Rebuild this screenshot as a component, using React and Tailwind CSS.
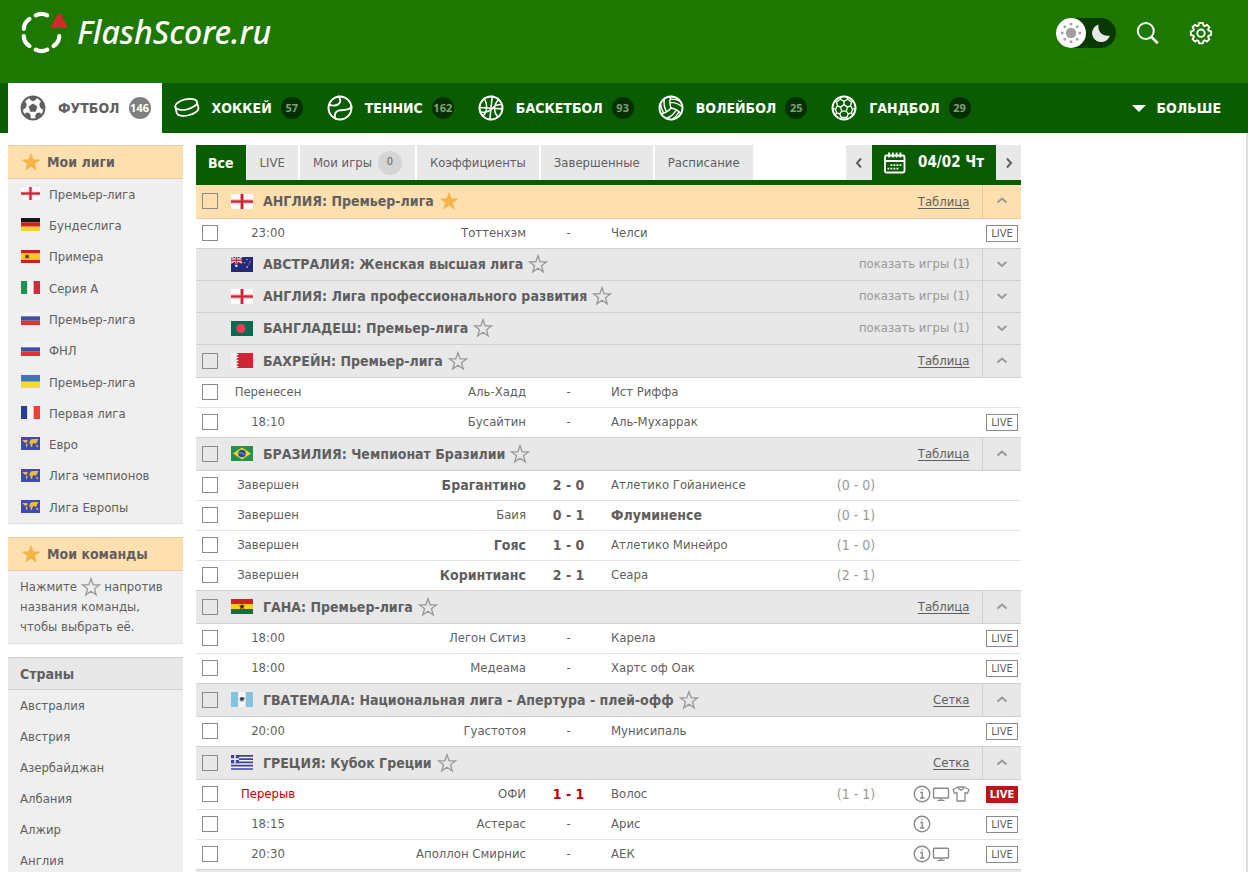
import React from 'react';

const STAR = 'M10 0.5l2.5 6.9 7.2 0.2-5.7 4.4 2 7-6-4.1-6 4.1 2-7L0.3 7.6l7.2-0.2z';

function Star({ filled, inline }) {
  return (
    <svg viewBox="-1.500 -1.500 23 23" className={`h-5 w-5 shrink-0 ${inline ? 'inline align-top' : ''}`} aria-hidden="true">
      <path d={STAR} fill={filled ? '#f6b244' : 'none'} stroke={filled ? '#f6b244' : '#999'} strokeWidth={filled ? 0.8 : 1.5} strokeLinejoin="miter" />
    </svg>
  );
}

const stripes = {
  de: ['h', '#151515', '#d8201f', '#fad02c'],
  ru: ['h', '#f4f4f4', '#3a52a8', '#e8302f'],
  it: ['v', '#1f9350', '#f5f5f5', '#cf2b3a'],
  fr: ['v', '#26408f', '#f5f5f5', '#ee4135'],
  gh: ['h', '#cf2027', '#f8d11c', '#1a6b3f'],
  gt: ['v', '#85c3df', '#f5f5f5', '#85c3df'],
};

function FlagArt({ code }) {
  if (stripes[code]) {
    const [dir, a, b, c] = stripes[code];
    const cols = [a, b, c];
    return (
      <>
        {cols.map((f, i) =>
          dir === 'h' ? (
            <rect key={i} x="0" y={i * 5} width="22" height="5" fill={f} />
          ) : (
            <rect key={i} x={i * 7.33} y="0" width="7.4" height="15" fill={f} />
          ),
        )}
        {code === 'gh' && <path d="M11 4.6l.8 2h2.2l-1.7 1.4.6 2.3-1.9-1.3-1.9 1.3.6-2.3L8 6.6h2.2z" fill="#222" />}
        {code === 'gt' && (
          <>
            <circle cx="11" cy="7.2" r="2.3" fill="#777" />
            <circle cx="10.6" cy="6.8" r="1.3" fill="#333" />
            <circle cx="12.8" cy="6.2" r=".7" fill="#333" />
          </>
        )}
      </>
    );
  }
  switch (code) {
    case 'en':
      return (
        <>
          <rect width="22" height="15" fill="#fbfbfb" />
          <path d="M11 0v15M0 7.5h22" stroke="#e9a0a6" strokeWidth="4" />
          <path d="M11 0v15M0 7.5h22" stroke="#cf2334" strokeWidth="2.2" />
        </>
      );
    case 'es':
      return (
        <>
          <rect width="22" height="15" fill="#c8202c" />
          <rect y="3.5" width="22" height="8" fill="#fbc72b" />
          <path d="M4.6 9.5v-3l1-1h3l1 1v3z" fill="#8a5a1e" />
          <path d="M6 6h2v3H6z" fill="#4d3312" />
        </>
      );
    case 'ua':
      return (
        <>
          <rect width="22" height="8" fill="#3f75bd" />
          <rect y="7.5" width="22" height="7.5" fill="#f3dc2c" />
        </>
      );
    case 'eu':
      return (
        <>
          <rect width="22" height="15" fill="#3d4cae" />
          <path d="M1.5 3.5h5.5l1 1.5-2 1.5H4.8L3.8 6zM5.5 7.5l2.3 1-1.2 3.5-.8-1.5zM10 5l1.5-2 3-.8h6L19 4.5l-1 2.5-1.5 1L15 6.5 13.5 8l-.8 3.5-1.3-.3-.4-2.7L9.7 7.6zM17.5 9.5l2-.2.5 1.9-1.8.3z" fill="#f2bd2d" />
        </>
      );
    case 'au':
      return (
        <>
          <rect width="22" height="15" fill="#252a74" />
          <path d="M0 0l11 6M11 0L0 6" stroke="#e9b9c6" strokeWidth="1.6" />
          <path d="M5.5 0v6.5M0 3.2h11" stroke="#f3dfe4" strokeWidth="2.6" />
          <path d="M5.5 0v6.5M0 3.2h11" stroke="#d33340" strokeWidth="1.5" />
          <circle cx="5.3" cy="8.8" r="1.3" fill="#e8e8f2" />
          <g fill="#9ea1c4">
            <circle cx="16" cy="2.6" r=".8" />
            <circle cx="13.5" cy="5.7" r=".8" />
            <circle cx="19" cy="5" r=".8" />
            <circle cx="16.2" cy="10" r="1" />
            <circle cx="17.6" cy="7" r=".6" />
          </g>
        </>
      );
    case 'bd':
      return (
        <>
          <rect width="22" height="15" fill="#086a52" />
          <circle cx="9.8" cy="7.5" r="4.6" fill="#e93e4d" />
        </>
      );
    case 'bh':
      return (
        <>
          <rect width="22" height="15" fill="#cb2631" />
          <path d="M0 0h5l3 1.5L5 3l3 1.5L5 6l3 1.5L5 9l3 1.5L5 12l3 1.5L5 15H0z" fill="#f3f1f1" />
        </>
      );
    case 'br':
      return (
        <>
          <rect width="22" height="15" fill="#22914d" />
          <path d="M11 1.5l9 6-9 6-9-6z" fill="#f4d42d" />
          <circle cx="11" cy="7.5" r="3.8" fill="#2c4b93" />
          <path d="M8 6.8q3.500-.3 6 2" stroke="#8ea6cc" strokeWidth=".8" fill="none" />
        </>
      );
    case 'gr':
      return (
        <>
          <rect width="22" height="15" fill="#f0f0f7" />
          <path d="M0 .8h22M0 4.1h22M0 7.4h22M0 10.7h22M0 14h22" stroke="#3d4394" strokeWidth="1.7" />
          <rect width="8" height="8.2" fill="#3d4394" />
          <path d="M4 0v8.2M0 4.1h8" stroke="#e8e8f4" strokeWidth="1.6" />
        </>
      );
    default:
      return null;
  }
}

function Flag({ code, small }) {
  return (
    <svg viewBox="0 0 22 15" preserveAspectRatio="none" className={small ? '-mt-[2px] h-[13px] w-[19px] shrink-0' : 'h-[15px] w-[22px] shrink-0'} aria-hidden="true">
      <FlagArt code={code} />
    </svg>
  );
}

function SportIcon({ name }) {
  const p = { fill: 'none', stroke: 'currentColor', strokeWidth: 1.9, strokeLinecap: 'round', strokeLinejoin: 'round' };
  return (
    <svg viewBox="0 0 26 26" className="h-[26px] w-[26px] shrink-0" aria-hidden="true" {...p}>
      {name === 'football' && (
        <>
          <circle cx="13" cy="13" r="11.4" strokeWidth="2" />
          <path d="M13 8.4l4.4 3.2-1.7 5.1h-5.4l-1.700-5.100z" fill="currentColor" stroke="none" />
          <path d="M9 1.800h8l-1.100 3-2.900 1.400-2.900-1.400zM1.400 11l3.500-5 1.800 3-.7 3.600-3 2.400zM24.600 11l-3.500-5-1.800 3 .7 3.600 3 2.400zM4.400 21l1.300-3.400 3.500.3 1.700 2.900-.8 3.600zM21.600 21l-1.300-3.400-3.500.3-1.700 2.900.8 3.600z" fill="currentColor" stroke="none" />
        </>
      )}
      {name === 'hockey' && (
        <g transform="translate(13 13) scale(.93) rotate(-13) translate(-13 -13.600)">
          <ellipse cx="13" cy="9.6" rx="12" ry="5.4" />
          <path d="M1 9.8v6.4c0 3 5.4 5.4 12 5.4s12-2.4 12-5.4V9.8" />
        </g>
      )}
      {name === 'tennis' && (
        <>
          <circle cx="13" cy="13" r="11.5" />
          <path d="M2.4 9.600c4 2.200 10.200.6 10.800-3.200.2-1.600-.4-3.400-1.600-4.900" />
          <path d="M8.600 23.600c-2-4.400-.2-7.200 3.600-8.200 4.600-1.200 9.200 1 12.200-3.600" />
        </>
      )}
      {name === 'basketball' && (
        <>
          <circle cx="13" cy="13" r="11.5" />
          <path d="M14.2 1.4L11.8 24.6M1.5 12.5l11.5.8 11.5.6" strokeWidth="1.6" />
          <path d="M6 3.8c3.6 4.600 3.800 13.800-1.600 17.400M21 4.600c-5.600 4.400-5.600 12.400-1.400 17M24.200 9.600c-3.800-.2-7.600 1-9.800 3.600-2 2.400-6.400 4.400-12 3.800" strokeWidth="1.5" />
        </>
      )}
      {name === 'volleyball' && (
        <>
          <circle cx="13" cy="13" r="11.5" />
          <g transform="translate(13 13) scale(1.150) translate(-12 -12)" strokeWidth="1.250">
            {[0, 120, 240].map((a) => (
              <path key={a} transform={`rotate(${a} 12 12)`} d="M12 12a13.300 13.300 0 0 1 0-10M11.100 7.100a16.550 16.550 0 0 1 10.900 4M11.300 4.300a17 17 0 0 1 9 1.900" />
            ))}
          </g>
        </>
      )}
      {name === 'handball' && (
        <>
          <circle cx="13" cy="13" r="11.5" />
          <path d="M13 9.6l3.6 2.5-1.4 4.1h-4.4l-1.4-4.1zM13 9.600V6.400M16.600 12.100l3-1.200M15.200 16.200l2 2.700M10.800 16.200l-2 2.700M9.400 12.100l-3-1.200M13 6.400l3.600-2.200 3.800 2.600-.8 4.100 2 3.400-1.200 3.600-3.200 1-1.400 3.600h-5.600l-1.400-3.600-3.200-1-1.200-3.600 2-3.400-.8-4.100 3.800-2.600zM9.400 4.200l.4-2.200M16.600 4.200L16.200 2M20.400 6.800l2-.2M21.600 14.300l2.700-.8M20.400 17.900l1.200 2M5.600 6.800l-2-.2M4.400 14.300l-2.700-.8M5.600 17.900l-1.200 2M10.200 22.500l-.8 1.500M15.800 22.500l.8 1.500" strokeWidth="1.300" />
        </>
      )}
    </svg>
  );
}

const sports = [
  ['football', 'Футбол', 146],
  ['hockey', 'Хоккей', 57],
  ['tennis', 'Теннис', 162],
  ['basketball', 'Баскетбол', 93],
  ['volleyball', 'Волейбол', 25],
  ['handball', 'Гандбол', 29],
];

function Header() {
  return (
    <header className="flex h-[83px] items-start justify-between bg-[#1e7800] px-5">
      <a href="#" className="flex items-center gap-[9px] pt-[9px] text-white" aria-label="FlashScore.ru">
        <svg viewBox="0 0 48 46" className="h-[46px] w-12" aria-hidden="true">
          <g fill="none" stroke="#fff" strokeWidth="4.200">
            {[-60, 0, 60, 120, 180].map((a) => (
              <path key={a} d="M15.800 40.700q5.700 3 11.400 0" transform={`rotate(${a} 21.500 23.500)`} strokeLinecap="round" />
            ))}
          </g>
          <path d="M38.200 4.800q1.100-1.600 2.200 0l7 12.300q.7 1.900-1 1.900H32.200q-1.700 0-1-1.900z" fill="#d12a2a" />
        </svg>
        <span className="font-['Noto_Sans',sans-serif] text-[32px] leading-[46px] font-medium italic">FlashScore.ru</span>
      </a>
      <div className="flex items-center pt-[18px] pr-[15px] text-white">
        <button type="button" aria-label="Тема" className="flex h-[30px] w-[60px] items-center rounded-full bg-[#083a00]">
          <span className="flex h-[30px] w-[30px] items-center justify-center rounded-full bg-white">
            <svg viewBox="0 0 22 22" className="h-[22px] w-[22px]" fill="#a0a0a0" aria-hidden="true">
              <circle cx="11" cy="11" r="5.2" />
              {[0, 45, 90, 135, 180, 225, 270, 315].map((a) => (
                <rect key={a} x="9.700" y="1" width="2.600" height="2.400" transform={`rotate(${a} 11 11)`} />
              ))}
            </svg>
          </span>
          <svg viewBox="0 0 20 20" className="ml-[5px] h-5 w-5" aria-hidden="true">
            <path d="M7.5 1.5a9 9 0 1 0 11.3 11C12 14 6.5 9 7.5 1.5z" fill="#e6e9e6" />
          </svg>
        </button>
        <button type="button" aria-label="Поиск" className="ml-5">
          <svg viewBox="0 0 24 24" className="h-6 w-6" fill="none" stroke="#fff" aria-hidden="true">
            <circle cx="9.800" cy="10" r="8" strokeWidth="2" />
            <path d="M15.500 16l6.300 6.200" strokeWidth="2.600" />
          </svg>
        </button>
        <button type="button" aria-label="Настройки" className="ml-[29px]">
          <svg viewBox="0 0 24 24" className="h-6 w-6" fill="none" stroke="#fff" strokeWidth="1.900" strokeLinejoin="round" aria-hidden="true">
            <path d="M10.1 2h3.8l.6 2.5 1.3.6 2.2-1.3 2.4 2.4-1.3 2.2.5 1.3 2.5.7v3.7l-2.500.6-.5 1.300 1.300 2.200-2.400 2.400-2.200-1.300-1.300.6-.6 2.500h-3.800l-.6-2.500-1.300-.6-2.200 1.300-2.400-2.400 1.300-2.200-.5-1.300-2.500-.6v-3.700l2.500-.7.5-1.300-1.300-2.200L6 3.800l2.200 1.300 1.300-.6z" />
            <circle cx="12" cy="12.2" r="3.7" />
          </svg>
        </button>
      </div>
    </header>
  );
}

function SportNav() {
  return (
    <nav className="flex h-[50px] items-center justify-between bg-[#095d00] pl-2 text-sm font-bold">
      <div className="flex h-full">
        {sports.map(([id, label, n], i) => (
          <a key={id} href="#" className={`flex h-full items-center pl-3 ${i === 0 ? 'bg-white pr-[11px] text-[#5f5f5f]' : 'pr-3 text-white'}`}>
            <SportIcon name={id} />
            <span className="ml-3 uppercase">{label}</span>
            <span className={`ml-[9px] flex h-[22px] w-[22px] items-center justify-center rounded-full font-['Noto_Sans',sans-serif] text-[11px] ${i === 0 ? 'bg-[#808080] text-white' : 'bg-[#052f00] text-[#7f9f7c]'}`}>{n}</span>
          </a>
        ))}
      </div>
      <button type="button" className="flex items-center gap-[10px] pr-[27px] font-bold text-white uppercase">
        <svg viewBox="0 0 14 7" className="h-[7px] w-[14px]" aria-hidden="true">
          <path d="M0 0h14L7 7z" fill="#fff" />
        </svg>
        Больше
      </button>
    </nav>
  );
}

const myLeagues = [
  ['en', 'Премьер-лига'],
  ['de', 'Бундеслига'],
  ['es', 'Примера'],
  ['it', 'Серия А'],
  ['ru', 'Премьер-лига'],
  ['ru', 'ФНЛ'],
  ['ua', 'Премьер-лига'],
  ['fr', 'Первая лига'],
  ['eu', 'Евро'],
  ['eu', 'Лига чемпионов'],
  ['eu', 'Лига Европы'],
];
const countries = ['Австралия', 'Австрия', 'Азербайджан', 'Албания', 'Алжир', 'Англия'];

function SideTitle({ children, star }) {
  return (
    <h2 className={`flex items-center gap-1 border-y text-sm font-bold ${star ? 'h-[34px] border-[#e6cba0] bg-[#ffe0ae] pl-[13px]' : 'h-[33px] border-[#d0d0d0] bg-[#e8e8e8] pl-3'}`}>
      {star && <Star filled />}
      <span className={star ? 'pl-[2px]' : ''}>{children}</span>
    </h2>
  );
}

function Sidebar() {
  return (
    <aside className="flex w-[175px] shrink-0 flex-col gap-[13px] text-[13px]">
      <section className="border-b border-[#e0e0e0] bg-[#efefef]">
        <SideTitle star>Мои лиги</SideTitle>
        <ul className="flex h-[344px] flex-col justify-between">
          {myLeagues.map(([c, n], i) => (
            <li key={i}>
              <a href="#" className="flex h-[31px] items-center pl-[13px]">
                <Flag code={c} small />
                <span className="pl-[9px]">{n}</span>
              </a>
            </li>
          ))}
        </ul>
      </section>
      <section className="border-b border-[#e0e0e0] bg-[#efefef]">
        <SideTitle star>Мои команды</SideTitle>
        <p className="px-3 pt-[6px] pb-[6px] leading-5">
          Нажмите <Star inline /> напротив<br />названия команды,<br />чтобы выбрать её.
        </p>
      </section>
      <section className="bg-[#efefef]">
        <SideTitle>Страны</SideTitle>
        <ul>
          {countries.map((n) => (
            <li key={n}>
              <a href="#" className="flex h-[31px] items-center pl-3">{n}</a>
            </li>
          ))}
        </ul>
      </section>
    </aside>
  );
}

function Chevron({ dir, dark }) {
  const d = { up: 'M1.5 7.500L6 3.500l4.500 4', down: 'M1.5 4L6 8l4.500-4', left: 'M8 1.5L4 6l4 4.500', right: 'M4 1.5L8 6l-4 4.500' }[dir];
  return (
    <svg viewBox="0 0 12 12" className="h-3 w-3" fill="none" stroke={dark ? '#5f5f5f' : '#999'} strokeWidth="2" aria-hidden="true">
      <path d={d} />
    </svg>
  );
}

function Filters() {
  const tabs = ['LIVE', 'Мои игры', 'Коэффициенты', 'Завершенные', 'Расписание'];
  return (
    <div className="flex justify-between border-b-5 border-[#095d00] text-[13px]">
      <div className="flex h-[35px] gap-px">
        <button type="button" className="bg-[#095d00] px-3 text-sm font-bold text-white">Все</button>
        <div className="flex gap-[2px]">
          {tabs.map((t) => (
            <button key={t} type="button" className="flex items-center bg-[#e8e8e8] px-[13px]">
              {t}
              {t === 'Мои игры' && <span className="ml-[6px] flex h-6 w-6 items-center justify-center rounded-full bg-[#d4d4d4] text-[11px] font-medium">0</span>}
            </button>
          ))}
        </div>
      </div>
      <div className="flex h-[35px]">
        <button type="button" aria-label="Предыдущий день" className="flex w-[26px] items-center justify-center bg-[#e8e8e8]"><Chevron dir="left" dark /></button>
        <button type="button" className="flex items-center bg-[#095d00] px-3 text-[15px] font-bold text-white">
          <svg viewBox="0 0 22 22" className="mr-3 h-[22px] w-[22px]" fill="none" stroke="#fff" strokeWidth="1.900" aria-hidden="true">
            <rect x="1" y="3.5" width="19.5" height="17" rx="1.5" />
            <path d="M1 9h19.500M5 .5v5M8.800 .5v5M12.600 .5v5M16.400 .5v5" />
            <path d="M6.500 13.200H18M3.500 16.600H15" strokeWidth="1.800" strokeDasharray="1.800 1.200" />
          </svg>
          04/02 Чт
        </button>
        <button type="button" aria-label="Следующий день" className="flex w-[25px] items-center justify-center bg-[#e8e8e8]"><Chevron dir="right" dark /></button>
      </div>
    </div>
  );
}

const leagues = [
  { f: 'en', c: 'АНГЛИЯ', n: 'Премьер-лига', link: 'Таблица', fav: true, games: [['23:00', 'Тоттенхэм', '-', 'Челси', '', '', 1]] },
  { f: 'au', c: 'АВСТРАЛИЯ', n: 'Женская высшая лига' },
  { f: 'en', c: 'АНГЛИЯ', n: 'Лига профессионального развития' },
  { f: 'bd', c: 'БАНГЛАДЕШ', n: 'Премьер-лига' },
  { f: 'bh', c: 'БАХРЕЙН', n: 'Премьер-лига', link: 'Таблица', games: [['Перенесен', 'Аль-Хадд', '-', 'Ист Риффа', '', '', 0], ['18:10', 'Бусайтин', '-', 'Аль-Мухаррак', '', '', 1]] },
  {
    f: 'br', c: 'БРАЗИЛИЯ', n: 'Чемпионат Бразилии', link: 'Таблица',
    games: [
      ['Завершен', 'Брагантино', '2 - 0', 'Атлетико Гойаниенсе', '(0 - 0)', '', 0],
      ['Завершен', 'Баия', '0 - 1', 'Флуминенсе', '(0 - 1)', '', 0],
      ['Завершен', 'Гояс', '1 - 0', 'Атлетико Минейро', '(1 - 0)', '', 0],
      ['Завершен', 'Коринтианс', '2 - 1', 'Сеара', '(2 - 1)', '', 0],
    ],
  },
  { f: 'gh', c: 'ГАНА', n: 'Премьер-лига', link: 'Таблица', games: [['18:00', 'Легон Ситиз', '-', 'Карела', '', '', 1], ['18:00', 'Медеама', '-', 'Хартс оф Оак', '', '', 1]] },
  { f: 'gt', c: 'ГВАТЕМАЛА', n: 'Национальная лига - Апертура - плей-офф', link: 'Сетка', games: [['20:00', 'Гуастотоя', '-', 'Мунисипаль', '', '', 1]] },
  { f: 'gr', c: 'ГРЕЦИЯ', n: 'Кубок Греции', link: 'Сетка', games: [['Перерыв', 'ОФИ', '1 - 1', 'Волос', '(1 - 1)', 'its', 2], ['18:15', 'Астерас', '-', 'Арис', '', 'i', 1], ['20:30', 'Аполлон Смирнис', '-', 'АЕК', '', 'it', 1]] },
];

function Check({ label }) {
  return <input type="checkbox" aria-label={label} className="ml-[6px] block h-4 w-4 appearance-none border border-[#8a8a8a]" />;
}

function InfoIcons({ kinds }) {
  const cls = 'h-[18px] w-[18px]';
  return (
    <div className="flex items-center gap-px pl-[17px]">
      {kinds.includes('i') && (
        <svg viewBox="0 0 18 18" className={cls} fill="none" stroke="#8a8a8a" strokeWidth="1.400" aria-hidden="true">
          <circle cx="9" cy="9" r="7.800" />
          <path d="M7.200 7.500h2v5.500M7 13h4.400" />
          <circle cx="9" cy="4.800" r=".8" fill="#8a8a8a" stroke="none" />
        </svg>
      )}
      {kinds.includes('t') && (
        <svg viewBox="0 0 18 18" className={cls} fill="none" stroke="#8a8a8a" strokeWidth="1.400" aria-hidden="true">
          <rect x="1.500" y="3.300" width="15" height="9.700" rx=".8" />
          <path d="M9 13v2.200M5.500 15.400h7" />
        </svg>
      )}
      {kinds.includes('s') && (
        <svg viewBox="0 0 18 18" className={`ml-px ${cls}`} fill="none" stroke="#8a8a8a" strokeWidth="1.300" strokeLinejoin="round" aria-hidden="true">
          <path d="M6 2L1 4.500l1.500 3.800 2.500-.8V16h8V7.500l2.500.8L17 4.500 12 2q-1 3-3 3T6 2zM6 2h6" />
        </svg>
      )}
    </div>
  );
}

function Live({ kind }) {
  if (!kind) return null;
  return (
    <a href="#" className={`ml-1 flex h-[17px] w-8 items-center justify-center border font-['DejaVu_Sans',sans-serif] text-[10px] ${kind === 2 ? 'border-[#c0121b] bg-[#c0121b] font-bold text-white' : 'border-[#8a8a8a] text-[#5f5f5f]'}`}>
      LIVE
    </a>
  );
}

function LeagueRows({ l }) {
  const border = l.fav ? 'border-[#e6cba0]' : 'border-[#d0d0d0]';
  return (
    <tbody>
      <tr className={`border-b ${border} ${l.fav ? 'h-[33px] bg-[#ffe0ae]' : l.games ? 'h-[33px] bg-[#e8e8e8]' : 'h-8 bg-[#e8e8e8]'}`}>
        <td>{l.games && <Check label={`${l.c}: ${l.n}`} />}</td>
        <th colSpan={6} className="text-left font-normal">
          <div className="flex items-center">
            <Flag code={l.f} />
            <span className="pl-[10px] text-sm font-bold">{l.c}: {l.n}</span>
            <button type="button" aria-label="В избранное" className="ml-[5px]"><Star filled={l.fav} /></button>
            {l.link ? (
              <a href="#" className="ml-auto pr-3 underline underline-offset-2">{l.link}</a>
            ) : (
              <span className="ml-auto pr-3 text-[#999]">показать игры (1)</span>
            )}
          </div>
        </th>
        <td className={`border-l ${border}`}>
          <button type="button" aria-label={l.games ? 'Свернуть' : 'Развернуть'} className="flex w-full justify-center"><Chevron dir={l.games ? 'up' : 'down'} /></button>
        </td>
      </tr>
      {(l.games || []).map(([time, home, score, away, half, icons, live], i, arr) => {
        const [h, a] = score.split(' - ').map(Number);
        return (
          <tr key={i} className={`h-[30px] border-b ${i === arr.length - 1 ? 'border-[#d0d0d0]' : 'border-[#e3e3e3]'}`}>
            <td><Check label={`${home} - ${away}`} /></td>
            <td className={`text-center ${live === 2 ? 'text-[#c00000]' : ''}`}>{time}</td>
            <td className={`text-right ${h > a ? 'text-sm font-bold' : ''}`}>{home}</td>
            <td className={`text-center ${score === '-' ? '' : 'text-sm font-bold'} ${live === 2 ? 'text-[#c00000]' : ''}`}>{score}</td>
            <td className={h < a ? 'text-sm font-bold' : ''}>{away}</td>
            <td className="text-center text-sm text-[#999]">{half}</td>
            <td><InfoIcons kinds={icons} /></td>
            <td><Live kind={live} /></td>
          </tr>
        );
      })}
    </tbody>
  );
}

export default function App() {
  return (
    <div className="h-screen overflow-hidden bg-white font-['DejaVu_Sans_Condensed','DejaVu_Sans',sans-serif] text-[13px] text-[#5f5f5f]">
      <Header />
      <SportNav />
      <div className="flex border-r-2 border-[#dedede] pt-3 pl-2">
        <Sidebar />
        <main className="ml-[13px] min-w-0 flex-1">
          <Filters />
          <table className="w-full table-fixed border-collapse">
            <colgroup>
              <col className="w-[35px]" />
              <col className="w-[74px]" />
              <col className="w-[221px]" />
              <col className="w-[85px]" />
              <col />
              <col className="w-20" />
              <col className="w-[86px]" />
              <col className="w-[39px]" />
            </colgroup>
            {leagues.map((l, i) => (
              <LeagueRows key={i} l={l} />
            ))}
          </table>
          <div className="h-8 bg-[#e8e8e8]" />
        </main>
        <div className="w-[225px] shrink-0" />
      </div>
    </div>
  );
}
